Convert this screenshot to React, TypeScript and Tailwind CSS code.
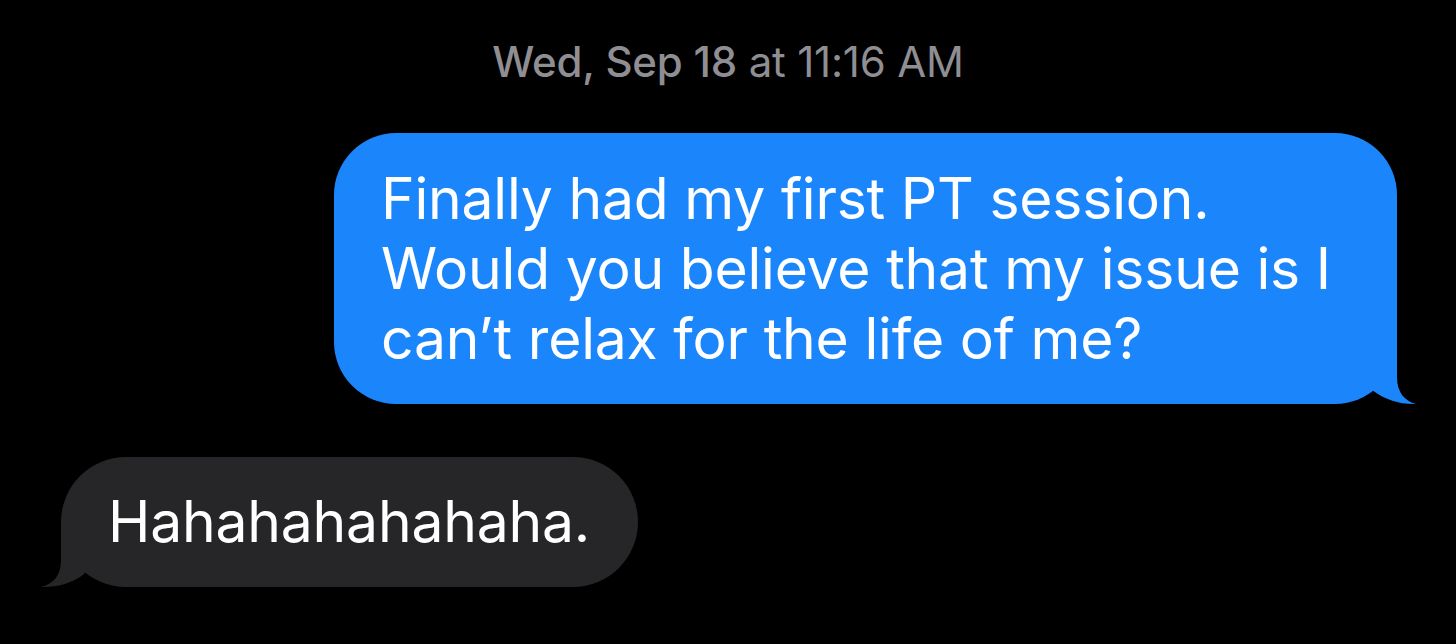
import React from "react";

export default function App() {
  return (
    <div
      className="w-[1456px] h-[644px] bg-black overflow-hidden flex flex-col"
      style={{ fontFamily: "Inter, 'Noto Sans', sans-serif" }}
    >
      <div className="pt-[38px] flex justify-center text-[42px] leading-[48px] text-[#8e8e93] tracking-[-0.2px]">
        <span className="font-medium">Wed, Sep 18</span>
        <span className="font-normal">&nbsp;at 11:16 AM</span>
      </div>

      <div className="mt-[47px] flex justify-end pr-[59px]">
        <div className="relative w-[1063px] bg-[#1b86fc] rounded-[62px] pl-[47px] pt-[31px] pb-[30px] text-white text-[57px] leading-[70px] tracking-[-0.2px]">
          <div className="relative z-10">
            Finally had my first PT session.
            <br />
            Would you believe that my issue is I
            <br />
            can’t relax for the life of me?
          </div>
          <svg
            className="absolute right-[-20px] bottom-[-1px]"
            width="100"
            height="65"
            viewBox="0 0 100 65"
          >
            <path
              d="M80 0 L80 37 C80 53 88 61 99 64 C83 64.5 68 60 55 50 L30 20 L30 0 Z"
              fill="#1b86fc"
            />
          </svg>
        </div>
      </div>

      <div className="mt-[53px] flex justify-start pl-[61px]">
        <div className="relative h-[130px] bg-[#262628] rounded-[65px] pl-[47px] pr-[48px] flex items-center text-white text-[57px] tracking-[-0.2px]">
          <div className="relative z-10">Hahahahahahaha.</div>
          <svg
            className="absolute left-[-21px] bottom-[-1px]"
            width="100"
            height="65"
            viewBox="0 0 100 65"
          >
            <path
              d="M21 0 L21 37 C21 53 13 61 1 64 C16 64.5 30 61 43 52 L70 20 L70 0 Z"
              fill="#262628"
            />
          </svg>
        </div>
      </div>
    </div>
  );
}
